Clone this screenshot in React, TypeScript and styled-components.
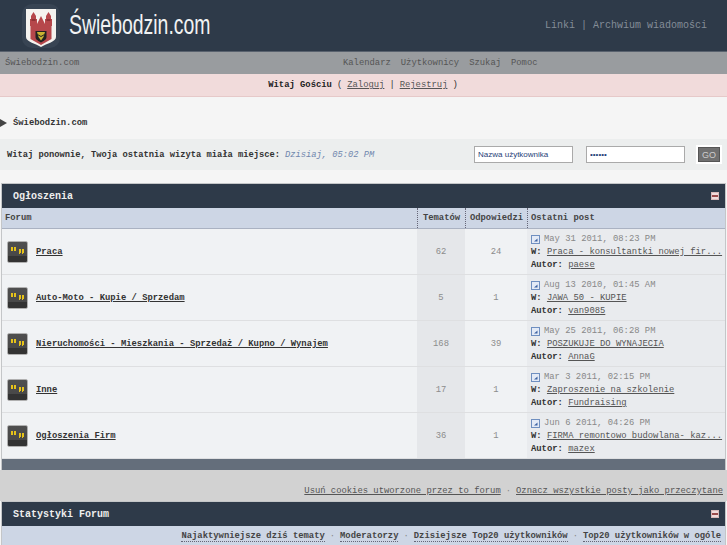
import styled, { createGlobalStyle } from 'styled-components';

const forums = [
  { name: 'Praca', topics: 62, replies: 24, date: 'May 31 2011, 08:23 PM', post: 'Praca - konsultantki nowej fir...', author: 'paese' },
  { name: 'Auto-Moto - Kupie / Sprzedam', topics: 5, replies: 1, date: 'Aug 13 2010, 01:45 AM', post: 'JAWA 50 - KUPIE', author: 'van9085' },
  { name: 'Nieruchomości - Mieszkania - Sprzedaż / Kupno / Wynajem', topics: 168, replies: 39, date: 'May 25 2011, 06:28 PM', post: 'POSZUKUJE DO WYNAJECIA', author: 'AnnaG' },
  { name: 'Inne', topics: 17, replies: 1, date: 'Mar 3 2011, 02:15 PM', post: 'Zaproszenie na szkolenie', author: 'Fundraising' },
  { name: 'Ogłoszenia Firm', topics: 36, replies: 1, date: 'Jun 6 2011, 04:26 PM', post: 'FIRMA remontowo budowlana- kaz...', author: 'mazex' },
];

const GlobalStyle = createGlobalStyle`
  html, body {
    margin: 0;
    height: 545px;
    overflow: hidden;
    background: #f5f5f5;
    font-family: "Liberation Mono", "Courier New", monospace;
    font-size: 8.85px;
    color: #333;
  }
`;

const Link = styled.a`
  color: #555;
  text-decoration: underline;
`;

const Header = styled.header`
  height: 52px;
  box-sizing: border-box;
  background: #2e3a49;
  display: flex;
  align-items: center;
  justify-content: space-between;
  padding: 0 20px 0 22px;
  border-bottom: 1px solid #59626e;
`;

const Brand = styled.div`
  display: flex;
  align-items: center;
  gap: 9px;
`;

const BrandName = styled.span`
  display: block;
  width: 141px;
  font: 27px "Liberation Sans", Arial, sans-serif;
  color: #f1f2f3;
  transform: scaleX(0.72);
  transform-origin: left center;
  white-space: nowrap;
`;

const HeaderLinks = styled.nav`
  color: #848d98;
  font-size: 10px;
  display: flex;
  gap: 6px;
`;

const NavBar = styled.nav`
  height: 22px;
  background: #999c9f;
  color: #555;
  display: grid;
  grid-template-columns: 338px 1fr;
  align-items: center;
  padding-left: 5px;
  box-sizing: border-box;
`;

const NavMenu = styled.div`
  display: flex;
  gap: 10px;
`;

const Notice = styled.div`
  height: 23px;
  box-sizing: border-box;
  background: #f1dbdb;
  border-bottom: 1px solid #e6c9c9;
  display: flex;
  align-items: center;
  justify-content: center;
  gap: 5px;
  padding-right: 1px;
  color: #333;
`;

const Strong = styled.b`
  color: #222;
`;

const Crumb = styled.div`
  display: flex;
  align-items: center;
  gap: 6px;
  height: 42px;
  padding-top: 10px;
  box-sizing: border-box;
  font-weight: bold;
  color: #333;
`;

const CrumbArrow = styled.i`
  width: 0;
  height: 0;
  border-style: solid;
  border-width: 4px 0 4px 7px;
  border-color: transparent transparent transparent #444;
`;

const LoginBar = styled.form`
  height: 31px;
  background: #eceeee;
  display: flex;
  align-items: center;
  padding: 0 7px 0 7px;
  font-size: 8.75px;
  font-weight: bold;
  color: #333;
  margin-bottom: 13px;
`;

const LastVisit = styled.em`
  font-weight: normal;
  color: #6f86ad;
  margin-left: 5px;
  flex: 1;
`;

const LoginInput = styled.input`
  width: 99px;
  height: 17px;
  box-sizing: border-box;
  border: 1px solid #aaa;
  background: #fff;
  color: #1f3f78;
  font: 8px "Liberation Sans", Arial, sans-serif;
  padding: 0 3px;
  margin-right: 13px;
  outline: none;
`;

const GoButton = styled.button`
  width: 22px;
  height: 15px;
  padding: 0;
  border: 1px solid #555;
  outline: 2px solid #fff;
  background: #707070;
  color: #ccc;
  font: 9px "Liberation Sans", Arial, sans-serif;
`;

const Box = styled.section`
  margin: 0 1px;
  border: 1px solid #c4c6c8;
  border-width: 1px 1px 0;
`;

const BoxTitle = styled.h2`
  margin: 0;
  height: 24px;
  background: #2e3a49;
  color: #eee;
  font-size: 10px;
  font-weight: bold;
  display: flex;
  align-items: center;
  justify-content: space-between;
  padding: 0 6px 0 11px;
  box-sizing: border-box;
`;

const Collapse = styled.span`
  width: 8px;
  height: 8px;
  background: #f1dbdb;
  border: 1px solid #d8b8b8;
  box-sizing: border-box;
  display: flex;
  align-items: center;
  &::after {
    content: '';
    width: 100%;
    height: 2px;
    background: #9a4a4a;
  }
`;

const Columns = styled.div`
  display: grid;
  grid-template-columns: 415px 48px 62px 1fr;
`;

const HeadRow = styled(Columns)`
  height: 21px;
  background: #cdd6e5;
  border-bottom: 1px solid #aab2c2;
  box-sizing: border-box;
  color: #444;
  font-weight: bold;
`;

const HeadCell = styled.div<{ $dotted?: boolean; $center?: boolean }>`
  display: flex;
  align-items: center;
  padding-left: ${(p) => (p.$center ? 0 : 3)}px;
  justify-content: ${(p) => (p.$center ? 'center' : 'flex-start')};
  border-left: ${(p) => (p.$dotted ? '1px dotted #667' : 'none')};
`;

const ForumRow = styled(Columns)`
  height: 46px;
  background: #f0f2f4;
  border-bottom: 1px solid #dedfe1;
  box-sizing: border-box;
`;

const NameCell = styled.div`
  display: flex;
  align-items: center;
  gap: 8px;
  padding-left: 5px;
  font-weight: bold;
  a {
    color: #333;
  }
`;

const ForumIcon = styled.span`
  width: 21px;
  height: 22px;
  background: linear-gradient(#4f4f4f 0, #484848 72%, #333 72%);
  border: 1px solid #b0b0b0;
  border-radius: 2px;
  box-sizing: border-box;
  display: flex;
  align-items: center;
  justify-content: center;
  padding-bottom: 3px;
`;

const CountCell = styled.div<{ $shade?: boolean }>`
  display: flex;
  align-items: center;
  justify-content: center;
  color: #8c8c8c;
  background: ${(p) => (p.$shade ? '#e5e7ea' : 'transparent')};
`;

const PostCell = styled.div`
  background: #e9ebee;
  padding: 5px 0 0 4px;
  display: flex;
  flex-direction: column;
  gap: 3px;
  color: #555;
  white-space: nowrap;
  b {
    color: #333;
  }
`;

const PostDate = styled.div`
  display: flex;
  align-items: center;
  gap: 4px;
  color: #888;
`;

const FootBar = styled.div`
  height: 11px;
  background: #646e7b;
`;

const LinksBand = styled.div`
  height: 31px;
  background: #d2d2d2;
  display: flex;
  align-items: flex-end;
  justify-content: flex-end;
  gap: 5px;
  padding: 0 4px 5px 0;
  box-sizing: border-box;
`;

const StatLinks = styled.div`
  height: 20px;
  background: #cdd6e5;
  display: flex;
  align-items: center;
  justify-content: flex-end;
  gap: 5px;
  padding-right: 4px;
  font-weight: bold;
  color: #444;
  span {
    border-bottom: 1px dotted #667;
  }
`;

const Dot = styled.i`
  font-style: normal;
  font-weight: normal;
  color: #888;
`;

const PostIcon = () => (
  <svg width="9" height="9" viewBox="0 0 9 9">
    <rect x="0.5" y="0.5" width="8" height="8" fill="#e3eaf6" stroke="#6f8fc0" />
    <path d="M3 6.500 6.500 3.500V6.500Z" fill="#3d63a3" />
  </svg>
);

const Crest = () => (
  <svg width="38" height="44" viewBox="0 0 38 44">
    <rect x="0" y="0" width="38" height="44" rx="10" fill="#384453" />
    <path d="M4 5H34V33C34 38 25 39 19 43C13 39 4 38 4 33Z" fill="#f5f3ef" />
    <path d="M8 15H9V12L11.500 8L14 12V15H15V20L19 12L23 20V15H24V12L26.500 8L29 12V15H30V22H29.500V35L19 41L8.500 35V22H8Z" fill="#b6474b" />
    <path d="M9.500 15H13.500V17H9.500ZM24.500 15H28.500V17H24.500Z" fill="#8f3236" />
    <path d="M13.500 27H24.500V33C24.500 36 21 37 19 38.500C17 37 13.500 36 13.500 33Z" fill="#222" />
    <path d="M15 28H23L21.500 33L19 36.500L16.500 33Z" fill="#c9b332" />
    <path d="M15.500 30.500L19 32.500L22.500 30.500" fill="none" stroke="#222" strokeWidth="1" />
  </svg>
);

const Quotes = () => (
  <svg width="13" height="7" viewBox="0 0 13 7">
    <path d="M0 0H2V4H0ZM3 0H5V4H3ZM8 2H10V6H9V7H8ZM11 2H13V6H12V7H11Z" fill="#e6c21a" />
  </svg>
);

const App = () => {
  return (
    <>
      <GlobalStyle />
      <Header>
        <Brand>
          <Crest />
          <BrandName>Świebodzin.com</BrandName>
        </Brand>
        <HeaderLinks>
          <span>Linki</span>
          <span>|</span>
          <span>Archwium wiadomości</span>
        </HeaderLinks>
      </Header>

      <NavBar>
        <span>Świebodzin.com</span>
        <NavMenu>
          <span>Kalendarz</span>
          <span>Użytkownicy</span>
          <span>Szukaj</span>
          <span>Pomoc</span>
        </NavMenu>
      </NavBar>

      <Notice>
        <Strong>Witaj Gościu</Strong>
        <span>(</span>
        <Link>Zaloguj</Link>
        <span>|</span>
        <Link>Rejestruj</Link>
        <span>)</span>
      </Notice>

      <Crumb>
        <CrumbArrow />
        Świebodzin.com
      </Crumb>

      <LoginBar>
        Witaj ponownie, Twoja ostatnia wizyta miała miejsce:
        <LastVisit>Dzisiaj, 05:02 PM</LastVisit>
        <LoginInput defaultValue="Nazwa użytkownika" />
        <LoginInput type="password" defaultValue="haslo1" />
        <GoButton type="button">GO</GoButton>
      </LoginBar>

      <Box>
        <BoxTitle>
          Ogłoszenia
          <Collapse />
        </BoxTitle>
        <HeadRow>
          <HeadCell>Forum</HeadCell>
          <HeadCell $dotted $center>Tematów</HeadCell>
          <HeadCell $dotted $center>Odpowiedzi</HeadCell>
          <HeadCell $dotted>Ostatni post</HeadCell>
        </HeadRow>
        {forums.map((forum) => (
          <ForumRow key={forum.name}>
            <NameCell>
              <ForumIcon>
                <Quotes />
              </ForumIcon>
              <Link>{forum.name}</Link>
            </NameCell>
            <CountCell $shade>{forum.topics}</CountCell>
            <CountCell>{forum.replies}</CountCell>
            <PostCell>
              <PostDate>
                <PostIcon />
                {forum.date}
              </PostDate>
              <div>
                <b>W:</b> <Link>{forum.post}</Link>
              </div>
              <div>
                <b>Autor:</b> <Link>{forum.author}</Link>
              </div>
            </PostCell>
          </ForumRow>
        ))}
        <FootBar />
      </Box>

      <LinksBand>
        <Link>Usuń cookies utworzone przez to forum</Link>
        <Dot>·</Dot>
        <Link>Oznacz wszystkie posty jako przeczytane</Link>
      </LinksBand>

      <Box>
        <BoxTitle>
          Statystyki Forum
          <Collapse />
        </BoxTitle>
        <StatLinks>
          <span>Najaktywniejsze dziś tematy</span>
          <Dot>·</Dot>
          <span>Moderatorzy</span>
          <Dot>·</Dot>
          <span>Dzisiejsze Top20 użytkowników</span>
          <Dot>·</Dot>
          <span>Top20 użytkowników w ogóle</span>
        </StatLinks>
      </Box>
    </>
  );
};

export default App;
